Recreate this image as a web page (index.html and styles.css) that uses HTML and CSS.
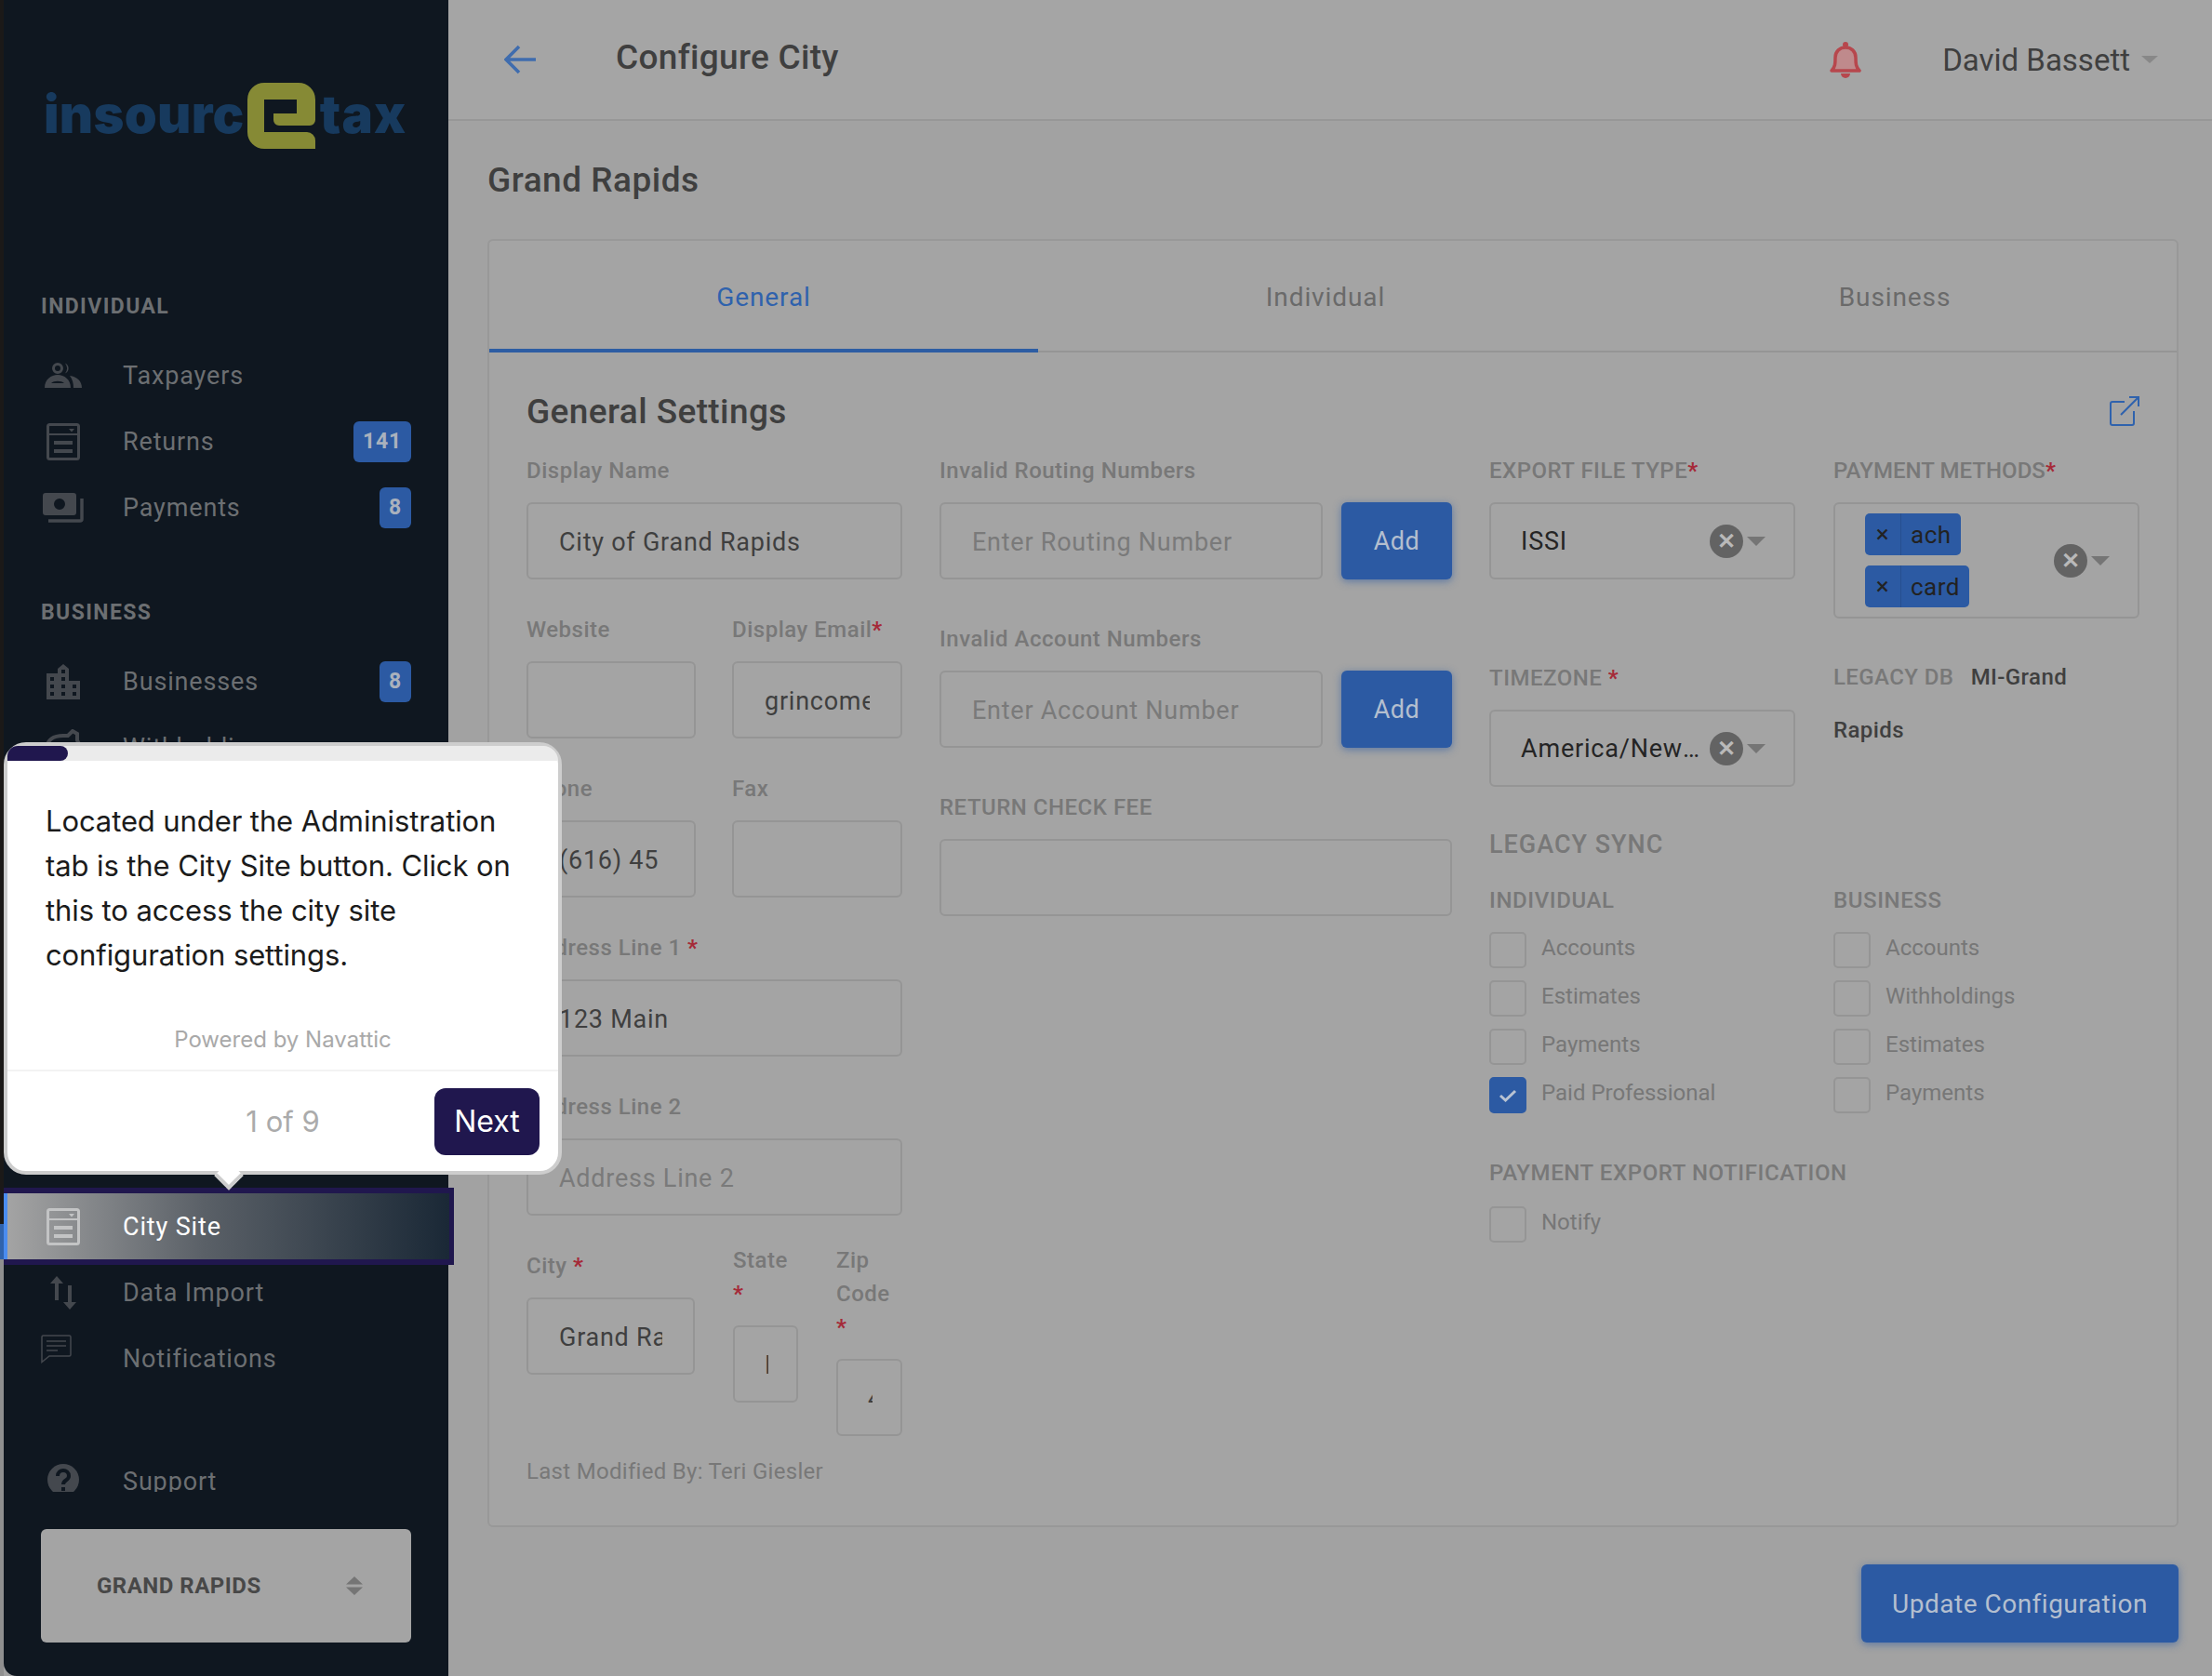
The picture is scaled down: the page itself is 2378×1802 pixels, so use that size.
FILE: index.html
```html
<!DOCTYPE html>
<html lang="en">

<head>
    <meta charset="UTF-8">
    <title>Configure City</title>
    <link rel="stylesheet" href="styles.css">
</head>

<body>
    <div class="app">
        <div class="strip"></div>

        <aside class="sidebar">
            <div class="logo">
                <span class="logo-name">insourc</span>
                <svg class="logo-e" width="73" height="71" viewBox="0 0 73 71">
                    <path fill="#868a35" d="M18 0H55A18 18 0 0 1 73 18V40A6 6 0 0 1 67 46H34A6 6 0 0 1 28 40V33H53V18H18V53H64A9 9 0 0 1 73 62V71H18A18 18 0 0 1 0 53V18A18 18 0 0 1 18 0Z" />
                </svg>
                <span class="logo-tax">tax</span>
            </div>

            <nav class="nav">
                <div class="nav-title">INDIVIDUAL</div>
                <a class="nav-item">
                    <span class="nav-icon">
                        <svg width="40" height="27" viewBox="0 0 40 27" fill="currentColor">
                            <circle cx="14" cy="6" r="4.5" fill="none" stroke="currentColor" stroke-width="3" />
                            <path d="M22 0.5A6 6 0 0 1 22 11.5A9 9 0 0 0 22 0.5Z" />
                            <path fill-rule="evenodd" d="M0 27C0 18 7 13 14 13C21 13 28 18 28 27ZM7 22H21C18 19 10 19 7 22Z" />
                            <path d="M27 14C35 15 40 20 40 27H31C31 22 30 18 27 14Z" />
                        </svg>
                    </span>
                    <span>Taxpayers</span>
                </a>
                <a class="nav-item">
                    <span class="nav-icon">
                        <svg width="36" height="40" viewBox="0 0 36 40" fill="currentColor">
                            <rect x="1.5" y="1.5" width="33" height="37" rx="2" fill="none" stroke="currentColor" stroke-width="3" />
                            <path d="M2 11H34V13H2ZM24 6H30L27 9.5ZM8 19H28V23H8ZM8 28H28V32H8Z" />
                        </svg>
                    </span>
                    <span>Returns</span>
                    <span class="badge">141</span>
                </a>
                <a class="nav-item">
                    <span class="nav-icon">
                        <svg width="44" height="32" viewBox="0 0 44 32">
                            <path fill="currentColor" fill-rule="evenodd" d="M3 0H33A3 3 0 0 1 36 3V21A3 3 0 0 1 33 24H3A3 3 0 0 1 0 21V3A3 3 0 0 1 3 0ZM18 6A6 6 0 1 0 18 18A6 6 0 1 0 18 6Z" />
                            <path fill="none" stroke="currentColor" stroke-width="3.5" d="M42 6V28A2 2 0 0 1 40 30H6" />
                        </svg>
                    </span>
                    <span>Payments</span>
                    <span class="badge">8</span>
                </a>

                <div class="nav-title nav-title-second">BUSINESS</div>
                <a class="nav-item">
                    <span class="nav-icon">
                        <svg width="36" height="38" viewBox="0 0 36 38" fill="currentColor">
                            <path fill-rule="evenodd" d="M0 10H12V5L18 0L24 5V18H36V38H0ZM16 6V10H20V6ZM4 14V18H8V14ZM16 14V18H20V14ZM4 22V26H8V22ZM16 22V26H20V22ZM28 22V26H32V22ZM4 30V34H8V30ZM16 30V34H20V30ZM28 30V34H32V30Z" />
                        </svg>
                    </span>
                    <span>Businesses</span>
                    <span class="badge">8</span>
                </a>
                <a class="nav-item">
                    <span class="nav-icon">
                        <svg width="40" height="40" viewBox="0 0 40 40" fill="none" stroke="currentColor" stroke-width="4">
                            <path d="M2 22C2 11 10 7 20 7H25L30 2L35 5V12C37 15 38 18 38 22V38H2Z" />
                        </svg>
                    </span>
                    <span>Withholdings</span>
                </a>

                <a class="nav-item nav-item-active">
                    <span class="nav-icon">
                        <svg width="36" height="40" viewBox="0 0 36 40" fill="currentColor">
                            <rect x="1.5" y="1.5" width="33" height="37" rx="2" fill="none" stroke="currentColor" stroke-width="3" />
                            <path d="M2 11H34V13H2ZM24 6H30L27 9.5ZM8 19H28V23H8ZM8 28H28V32H8Z" />
                        </svg>
                    </span>
                    <span>City Site</span>
                </a>
                <a class="nav-item">
                    <span class="nav-icon">
                        <svg width="28" height="36" viewBox="0 0 28 36" fill="currentColor">
                            <path d="M7 0L14 8H9V26H5V8H0ZM19 10H23V28H28L21 36L14 28H19Z" />
                        </svg>
                    </span>
                    <span>Data Import</span>
                </a>
                <a class="nav-item">
                    <span class="nav-icon nav-icon-raised">
                        <svg width="33" height="31" viewBox="0 0 33 31" fill="none" stroke="currentColor" stroke-width="1.5">
                            <path d="M1 2.5A1.5 1.5 0 0 1 2.5 1H30.5A1.5 1.5 0 0 1 32 2.5V21.5A1.500 1.500 0 0 1 30.5 23H9L1 29.5Z" />
                            <path d="M6 7H27M6 12H27M6 17H18" />
                        </svg>
                    </span>
                    <span>Notifications</span>
                </a>
                <a class="nav-item nav-item-support">
                    <span class="nav-icon nav-icon-help">
                        <svg width="34" height="34" viewBox="0 0 34 34">
                            <circle cx="17" cy="17" r="17" fill="currentColor" />
                            <path fill="none" stroke="#0f1720" stroke-width="4" d="M11 13C11 5 23 5 23 13C23 18 17 17 17 22" />
                            <rect x="15" y="25" width="4" height="4" fill="#0f1720" />
                        </svg>
                    </span>
                    <span>Support</span>
                </a>
            </nav>

            <div class="switcher">
                <span>GRAND RAPIDS</span>
                <svg width="18" height="20" viewBox="0 0 18 20" fill="#757575">
                    <path d="M9 0L18 8.500H0ZM0 11.500H18L9 20Z" />
                </svg>
            </div>
        </aside>

        <main class="main">
            <header class="topbar">
                <svg class="back" width="34" height="32" viewBox="0 0 34 32" fill="none" stroke="#3f6cae" stroke-width="3.500">
                    <path d="M34 16H3M16 2L2 16L16 30" />
                </svg>
                <h1 class="topbar-title">Configure City</h1>
                <svg class="bell" width="34" height="40" viewBox="0 0 34 40">
                    <path fill="#bf8a8c" stroke="#b7474d" stroke-width="3.500" stroke-linejoin="round" d="M2 32C6 28 6 24 6 18C6 11 11 7 17 7C23 7 28 11 28 18C28 24 28 28 32 32Z" />
                    <circle cx="17" cy="4" r="3" fill="#b7474d" />
                    <path fill="#b7474d" d="M12 35H22A5 5 0 0 1 12 35Z" />
                </svg>
                <span class="user">David Bassett</span>
                <span class="caret caret-user"></span>
            </header>

            <div class="content">
                <h2 class="page-title">Grand Rapids</h2>

                <section class="card">
                    <div class="tabs">
                        <a class="tab tab-active">General</a>
                        <a class="tab">Individual</a>
                        <a class="tab">Business</a>
                    </div>

                    <div class="card-body">
                        <div class="card-head">
                            <h3>General Settings</h3>
                            <svg width="32" height="32" viewBox="0 0 32 32" fill="none" stroke="#2f62ad" stroke-width="2">
                                <path d="M16 6H3A2 2 0 0 0 1 8V29A2 2 0 0 0 3 31H24A2 2 0 0 0 26 29V16M12 20L31 1M21 1H31V11" />
                            </svg>
                        </div>

                        <div class="form">
                            <div class="col-address">
                                <div class="field">
                                    <label>Display Name</label>
                                    <input type="text" value="City of Grand Rapids">
                                </div>
                                <div class="field-row">
                                    <div class="field">
                                        <label>Website</label>
                                        <input type="text">
                                    </div>
                                    <div class="field">
                                        <label>Display Email<b>*</b></label>
                                        <input type="text" value="grincome@grcity.us">
                                    </div>
                                </div>
                                <div class="field-row">
                                    <div class="field">
                                        <label>Phone</label>
                                        <input type="text" value="(616) 45">
                                    </div>
                                    <div class="field">
                                        <label>Fax</label>
                                        <input type="text">
                                    </div>
                                </div>
                                <div class="field">
                                    <label>Address Line 1 <b>*</b></label>
                                    <input type="text" value="123 Main">
                                </div>
                                <div class="field">
                                    <label>Address Line 2</label>
                                    <input type="text" placeholder="Address Line 2">
                                </div>
                                <div class="city-row">
                                    <div class="field field-city">
                                        <label>City <b>*</b></label>
                                        <input type="text" value="Grand Rapids">
                                    </div>
                                    <div class="field field-small">
                                        <label>State <b>*</b></label>
                                        <input type="text" value="MI">
                                    </div>
                                    <div class="field field-small">
                                        <label>Zip Code <b>*</b></label>
                                        <input type="text" value="49503">
                                    </div>
                                </div>
                                <div class="modified">Last Modified By: Teri Giesler</div>
                            </div>

                            <div class="col-invalid">
                                <div class="field">
                                    <label>Invalid Routing Numbers</label>
                                    <div class="input-add">
                                        <input type="text" placeholder="Enter Routing Number">
                                        <button class="btn-add">Add</button>
                                    </div>
                                </div>
                                <div class="field">
                                    <label>Invalid Account Numbers</label>
                                    <div class="input-add">
                                        <input type="text" placeholder="Enter Account Number">
                                        <button class="btn-add">Add</button>
                                    </div>
                                </div>
                                <div class="field">
                                    <label>RETURN CHECK FEE</label>
                                    <input type="text">
                                </div>
                            </div>

                            <div class="col-settings">
                                <div class="field">
                                    <label>EXPORT FILE TYPE<b>*</b></label>
                                    <div class="select">
                                        <span class="select-value">ISSI</span>
                                        <span class="clear">&#10005;</span>
                                        <span class="caret"></span>
                                    </div>
                                </div>
                                <div class="field">
                                    <label class="label-tight">PAYMENT METHODS<b>*</b></label>
                                    <div class="select select-multi">
                                        <div class="chips">
                                            <div class="chip"><i>&times;</i><span>ach</span></div>
                                            <div class="chip"><i>&times;</i><span>card</span></div>
                                        </div>
                                        <span class="clear">&#10005;</span>
                                        <span class="caret"></span>
                                    </div>
                                </div>
                                <div class="field">
                                    <label>TIMEZONE <b>*</b></label>
                                    <div class="select">
                                        <span class="select-value">America/New_York</span>
                                        <span class="clear">&#10005;</span>
                                        <span class="caret"></span>
                                    </div>
                                </div>
                                <div class="legacy-db">
                                    <span class="legacy-label">LEGACY DB</span>
                                    <span>MI-Grand Rapids</span>
                                </div>

                                <div class="sync">
                                    <h4>LEGACY SYNC</h4>
                                    <div class="sync-cols">
                                        <div>
                                            <h5>INDIVIDUAL</h5>
                                            <div class="check"><span class="box"></span>Accounts</div>
                                            <div class="check"><span class="box"></span>Estimates</div>
                                            <div class="check"><span class="box"></span>Payments</div>
                                            <div class="check">
                                                <span class="box box-on">
                                                    <svg width="20" height="16" viewBox="0 0 20 16" fill="none" stroke="#b9c3d2" stroke-width="3">
                                                        <path d="M2 8L7.500 13L18 3" />
                                                    </svg>
                                                </span>Paid Professional
                                            </div>
                                        </div>
                                        <div>
                                            <h5>BUSINESS</h5>
                                            <div class="check"><span class="box"></span>Accounts</div>
                                            <div class="check"><span class="box"></span>Withholdings</div>
                                            <div class="check"><span class="box"></span>Estimates</div>
                                            <div class="check"><span class="box"></span>Payments</div>
                                        </div>
                                    </div>
                                    <h5 class="notify-title">PAYMENT EXPORT NOTIFICATION</h5>
                                    <div class="check"><span class="box"></span>Notify</div>
                                </div>
                            </div>
                        </div>
                    </div>
                </section>

                <div class="actions">
                    <button class="btn-update">Update Configuration</button>
                </div>
            </div>
        </main>

        <div class="tour">
            <div class="tour-progress">
                <div class="tour-progress-fill"></div>
            </div>
            <p class="tour-text">Located under the Administration tab is the City Site button. Click on this to access the city site configuration settings.</p>
            <div class="tour-brand">Powered by Navattic</div>
            <div class="tour-foot">
                <span class="tour-count">1 of 9</span>
                <button class="tour-next">Next</button>
            </div>
            <div class="tour-arrow"></div>
        </div>
    </div>
</body>

</html>
```

FILE: styles.css
```css
* {
    padding: 0;
    margin: 0;
    box-sizing: border-box;
}

html,
body {
    width: 2378px;
    height: 1802px;
    overflow: hidden;
}

body {
    font-family: Roboto, "Open Sans", sans-serif;
    color: #3f3f3f;
    background: #a2a2a2;
}

.app {
    position: relative;
    display: flex;
    height: 1802px;
}

.strip {
    width: 4px;
    background: linear-gradient(180deg, #1b1918 0, #1b1918 1316px, #2f63ad 1316px, #2f63ad 1354px, #8f8f8f 1354px, #8f8f8f 100%);
}

/* sidebar */

.sidebar {
    width: 478px;
    background: #0f1720;
    border-bottom-left-radius: 14px;
    position: relative;
    flex: none;
}

.logo {
    display: flex;
    align-items: flex-end;
    height: 72px;
    margin-top: 88px;
    padding-left: 43px;
    font-family: Inter, sans-serif;
    font-weight: 900;
    font-size: 56px;
    line-height: 56px;
    color: #173a5e;
}

.logo span {
    margin-bottom: 9px;
}

.logo-name {
    letter-spacing: 0.300px;
}

.logo-e {
    margin: 0 5px 0 3px;
    flex: none;
}

.logo-tax {
    letter-spacing: 1.200px;
}

.nav {
    width: 484px;
    height: 1444px;
    overflow: hidden;
    padding-top: 158px;
    color: #6c6f72;
}

.nav-title {
    height: 24px;
    line-height: 24px;
    padding-left: 40px;
    margin-bottom: 26px;
    font-size: 23px;
    font-weight: 700;
    letter-spacing: 1.400px;
}

.nav-title-second {
    margin-top: 66px;
}

.nav-item {
    display: flex;
    align-items: center;
    width: 478px;
    height: 71px;
    padding: 0 40px;
    font-size: 27px;
    letter-spacing: 0.850px;
}

.nav-icon {
    display: flex;
    justify-content: center;
    width: 48px;
    margin-right: 40px;
    color: #44484e;
}

.nav-icon-raised {
    justify-content: flex-start;
    margin-top: -20px;
}

.nav-icon-help {
    margin-top: -4px;
}

.badge {
    margin-left: auto;
    min-width: 34px;
    height: 44px;
    padding: 0 10px;
    line-height: 44px;
    text-align: center;
    font-size: 23px;
    font-weight: 700;
    letter-spacing: 0.800px;
    color: #a9b1bd;
    background: #2c5aa3;
    border-radius: 6px;
}

.nav-item-active {
    width: 484px;
    height: 83px;
    margin-top: 438px;
    margin-bottom: -6px;
    color: #fff;
    border: solid #20174e;
    border-width: 6px 5px 6px 0;
    background: linear-gradient(90deg, #a5a5a5, #5a6067 45%, #1a2836);
    box-shadow: inset 4px 0 0 #4a8cf0;
}

.nav-item-active .nav-icon {
    color: #c3c4c5;
}

.nav-item-support {
    margin-top: 61px;
}

.switcher {
    display: flex;
    align-items: center;
    justify-content: space-between;
    width: 398px;
    height: 122px;
    margin: 40px 0 0 40px;
    padding: 0 52px 0 60px;
    font-size: 24px;
    font-weight: 700;
    letter-spacing: 0.500px;
    color: #484848;
    background: #a4a4a4;
    border-radius: 6px;
}

/* main */

.main {
    flex: 1;
    min-width: 0;
}

.topbar {
    display: flex;
    align-items: center;
    height: 130px;
    padding: 0 58px 0 60px;
    background: #a5a5a5;
    border-bottom: 2px solid #979797;
}

.back {
    margin-right: 86px;
}

.topbar-title {
    font-size: 37px;
    font-weight: 500;
    letter-spacing: 0.300px;
    margin-top: -6px;
}

.bell {
    margin-left: auto;
    margin-right: 87px;
}

.user {
    font-size: 33px;
    margin-right: 12px;
}

.caret {
    flex: none;
    width: 0;
    height: 0;
    border-left: 10px solid transparent;
    border-right: 10px solid transparent;
    border-top: 10px solid #757575;
}

.caret-user {
    border-top-color: #888;
    border-left-width: 9px;
    border-right-width: 9px;
    border-top-width: 8px;
}

.content {
    padding: 42px 36px 0 42px;
}

.page-title {
    font-size: 37px;
    line-height: 44px;
    font-weight: 500;
    letter-spacing: 0.500px;
    margin-bottom: 41px;
}

.card {
    height: 1385px;
    background: #a4a4a4;
    border: 2px solid #989898;
    border-radius: 6px;
}

.tabs {
    display: grid;
    grid-template-columns: 590px 618px 1fr;
    height: 120px;
    border-bottom: 2px solid #959595;
}

.tab {
    height: 120px;
    line-height: 122px;
    text-align: center;
    font-size: 28px;
    letter-spacing: 0.900px;
    color: #6a6a6a;
}

.tab-active {
    color: #2f62ad;
    border-bottom: 4px solid #2d5da3;
}

.card-body {
    padding: 0 40px;
}

.card-head {
    display: flex;
    align-items: center;
    justify-content: space-between;
    height: 48px;
    margin: 39px 0 21px;
}

.card-head h3 {
    font-size: 37px;
    font-weight: 500;
    letter-spacing: 0.400px;
}

.form {
    display: grid;
    grid-template-columns: 404px 551px 699px;
    column-gap: 40px;
    align-items: start;
}

.field {
    margin-bottom: 35px;
}

label {
    display: block;
    padding-top: 1px;
    margin-bottom: 16px;
    font-size: 24px;
    line-height: 36px;
    font-weight: 500;
    letter-spacing: 0.500px;
    color: #787878;
}

.label-tight {
    letter-spacing: 0.050px;
}

label b {
    color: #a52a38;
    font-weight: 700;
}

input {
    display: block;
    width: 100%;
    height: 83px;
    padding: 2px 33px 0 33px;
    font-family: inherit;
    font-size: 27px;
    letter-spacing: 0.750px;
    color: #3f3f3f;
    background: transparent;
    border: 2px solid #959595;
    border-radius: 6px;
    outline: none;
}

input::placeholder {
    color: #7a7a7a;
    opacity: 1;
}

.field-row {
    display: grid;
    grid-template-columns: 182px 183px;
    column-gap: 39px;
}

.city-row {
    display: grid;
    grid-template-columns: 181px 70px 71px;
    column-gap: 41px;
    align-items: start;
}

.field-small {
    margin-top: -6px;
}

.field-small input {
    padding: 2px 30px 0 32px;
}

.modified {
    margin-top: -15px;
    font-size: 24px;
    line-height: 36px;
    letter-spacing: 0.300px;
    color: #787878;
}

.col-invalid .field {
    margin-bottom: 45px;
}

.input-add {
    display: flex;
    gap: 20px;
}

.input-add input {
    flex: 1;
    min-width: 0;
}

.btn-add,
.btn-update {
    border: none;
    font-family: inherit;
    letter-spacing: 0.500px;
    color: #b4bfcf;
    background: #2c5aa3;
    border-radius: 6px;
    box-shadow: 0 2px 8px rgba(44, 90, 163, 0.6);
}

.btn-add {
    flex: none;
    width: 119px;
    height: 83px;
    font-size: 27px;
}

.col-settings {
    display: grid;
    grid-template-columns: 329px 329px;
    column-gap: 41px;
    align-items: start;
}

.col-settings .field {
    margin-bottom: 45px;
}

.select {
    display: flex;
    align-items: center;
    height: 83px;
    padding: 0 30px 0 32px;
    font-size: 27px;
    letter-spacing: 0.800px;
    color: #252525;
    border: 2px solid #959595;
    border-radius: 6px;
}

.select-value {
    flex: 1;
    min-width: 0;
    overflow: hidden;
    white-space: nowrap;
    text-overflow: ellipsis;
    margin-right: 4px;
}

.clear {
    flex: none;
    width: 36px;
    height: 36px;
    margin-right: 4px;
    line-height: 36px;
    text-align: center;
    font-size: 24px;
    font-weight: 700;
    letter-spacing: 0;
    color: #b9b9b9;
    background: #636363;
    border-radius: 50%;
}

.select-multi {
    height: 125px;
    justify-content: space-between;
}

.chips {
    flex: 1;
    display: flex;
    flex-direction: column;
    align-items: flex-start;
    gap: 11px;
}

.chip {
    display: flex;
    align-items: center;
    height: 45px;
    font-size: 26px;
    letter-spacing: 0.500px;
    color: #222;
    background: #2c5aa3;
    border-radius: 5px;
}

.chip i {
    width: 39px;
    line-height: 45px;
    text-align: center;
    font-style: normal;
    border-right: 1px solid #274f90;
}

.chip span {
    padding: 0 10px 0 10px;
}

.legacy-db {
    max-width: 310px;
    font-size: 24px;
    line-height: 57px;
    font-weight: 500;
    letter-spacing: 0.400px;
    margin-top: -10px;
}

.legacy-label {
    color: #787878;
    margin-right: 12px;
}

.sync {
    grid-column: 1 / 3;
    margin-top: -1px;
}

.sync h4 {
    font-size: 27px;
    line-height: 36px;
    font-weight: 500;
    letter-spacing: 1px;
    color: #787878;
    margin-bottom: 24px;
}

.sync h5 {
    font-size: 24px;
    line-height: 36px;
    font-weight: 500;
    letter-spacing: 0.600px;
    color: #787878;
    margin-bottom: 16px;
}

.sync-cols {
    display: grid;
    grid-template-columns: 329px 329px;
    column-gap: 41px;
}

.sync .notify-title {
    margin: 33px 0 18px;
}

.check {
    display: flex;
    align-items: flex-start;
    height: 52px;
    font-size: 24px;
    line-height: 34px;
    color: #777;
}

.box {
    display: flex;
    align-items: center;
    justify-content: center;
    flex: none;
    width: 40px;
    height: 39px;
    margin-right: 16px;
    border: 2px solid #959595;
    border-radius: 5px;
}

.box-on {
    background: #2c5aa3;
    border-color: #2c5aa3;
}

.actions {
    display: flex;
    justify-content: flex-end;
    margin-top: 40px;
}

.btn-update {
    width: 341px;
    height: 84px;
    font-size: 28px;
}

/* tour tooltip */

.tour {
    position: absolute;
    left: 4px;
    top: 798px;
    width: 600px;
    height: 465px;
    display: flex;
    flex-direction: column;
    font-family: Inter, sans-serif;
    background: #fff;
    border: 4px solid #cdcdcd;
    border-radius: 24px;
}

.tour-progress {
    height: 16px;
    background: #ebebeb;
    border-radius: 20px 20px 0 0;
    flex: none;
}

.tour-progress-fill {
    width: 65px;
    height: 16px;
    background: #20174e;
    border-radius: 14px 10px 10px 0;
}

.tour-text {
    margin: 41px 24px 0 41px;
    font-size: 31px;
    line-height: 48px;
    letter-spacing: -0.100px;
    color: #1b1b1b;
}

.tour-brand {
    margin-top: 52px;
    text-align: center;
    font-size: 24px;
    line-height: 30px;
    color: #a9a9a9;
}

.tour-foot {
    position: relative;
    display: flex;
    align-items: center;
    justify-content: flex-end;
    height: 109px;
    margin-top: 17px;
    padding-right: 20px;
    border-top: 2px solid #f3f3f3;
}

.tour-count {
    position: absolute;
    left: 0;
    right: 0;
    text-align: center;
    font-size: 31px;
    color: #ababab;
}

.tour-next {
    position: relative;
    width: 113px;
    height: 72px;
    font-family: inherit;
    font-size: 32px;
    color: #fff;
    background: #20174e;
    border: none;
    border-radius: 12px;
}

.tour-arrow {
    position: absolute;
    left: 227px;
    bottom: -16px;
    width: 22px;
    height: 22px;
    background: #fff;
    border: solid #cdcdcd;
    border-width: 0 4px 4px 0;
    transform: rotate(45deg);
}
```
